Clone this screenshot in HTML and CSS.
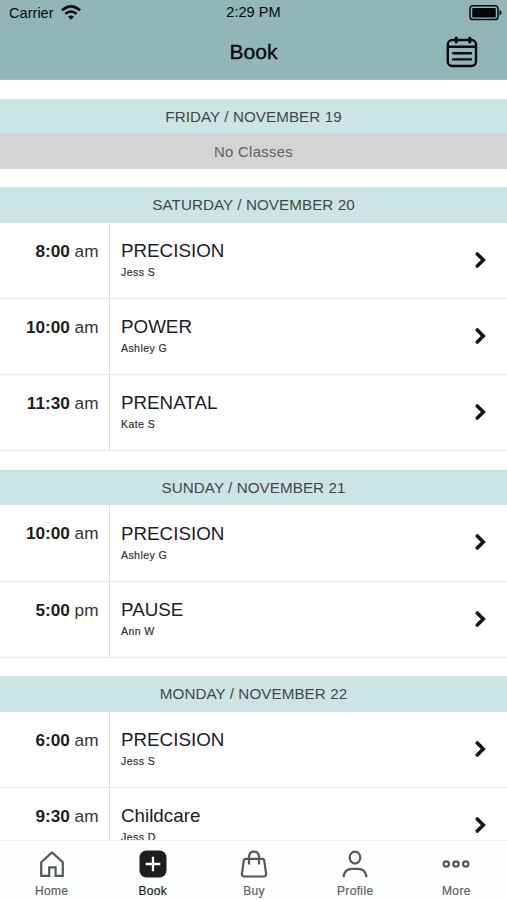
FILE: index.html
```html
<!DOCTYPE html>
<html lang="en">
<head>
<meta charset="utf-8">
<title>Book</title>
<link rel="stylesheet" href="styles.css">
</head>
<body>
<svg class="defs" width="0" height="0" aria-hidden="true">
  <symbol id="chevron" viewBox="0 0 12 18"><path d="M2.3 3 8.3 9l-6 6" fill="none" stroke="#151515" stroke-width="3.6" stroke-linecap="round"/></symbol>
</svg>
<div class="app">
  <header class="top">
    <div class="status">
      <div class="carrier"><span>Carrier</span>
        <svg width="20" height="15" viewBox="0 0 20 15" fill="none" stroke="#05090a" stroke-width="2.5"><path d="M.9 5.3Q10-2.6 19.1 5.3M4.3 8.8q5.7-4.7 11.4 0"/><path d="M7 11.7q3-2.2 6 0l-3 3z" fill="#05090a" stroke="none"/></svg>
      </div>
      <div class="clock">2:29 PM</div>
      <svg class="battery" width="33" height="16" viewBox="0 0 33 16"><rect x="1" y=".8" width="28" height="13.8" rx="3.2" fill="none" stroke="#05090a" stroke-width="1.5"/><rect x="3.2" y="3" width="23.6" height="9.4" rx="1" fill="#05090a"/><path d="M30.5 5q2 .7 2 2.7t-2 2.7z" fill="#05090a"/></svg>
    </div>
    <div class="titlebar">
      <h1>Book</h1>
      <svg class="calendar" width="32" height="32" viewBox="0 0 32 32" fill="none" stroke="#05090a" stroke-width="2.4" stroke-linecap="round"><rect x="1.8" y="4" width="28.2" height="26" rx="4.5"/><path d="M2 10.7h27.5M7.2 17.2h17.8M7.2 23.4h17.8"/><path d="M10.2 2v4M23.8 2v4" stroke-width="3"/></svg>
    </div>
  </header>
  <main class="schedule">
    <section class="day">
      <h2>FRIDAY / NOVEMBER 19</h2>
      <p class="empty">No Classes</p>
    </section>
    <section class="day">
      <h2>SATURDAY / NOVEMBER 20</h2>
      <div class="row"><div class="time"><b>8:00</b> am</div><div class="info"><div class="name">PRECISION</div><div class="who">Jess S</div></div><svg class="go"><use href="#chevron"/></svg></div>
      <div class="row"><div class="time"><b>10:00</b> am</div><div class="info"><div class="name">POWER</div><div class="who">Ashley G</div></div><svg class="go"><use href="#chevron"/></svg></div>
      <div class="row"><div class="time"><b>11:30</b> am</div><div class="info"><div class="name">PRENATAL</div><div class="who">Kate S</div></div><svg class="go"><use href="#chevron"/></svg></div>
    </section>
    <section class="day">
      <h2>SUNDAY / NOVEMBER 21</h2>
      <div class="row"><div class="time"><b>10:00</b> am</div><div class="info"><div class="name">PRECISION</div><div class="who">Ashley G</div></div><svg class="go"><use href="#chevron"/></svg></div>
      <div class="row"><div class="time"><b>5:00</b> pm</div><div class="info"><div class="name">PAUSE</div><div class="who">Ann W</div></div><svg class="go"><use href="#chevron"/></svg></div>
    </section>
    <section class="day">
      <h2>MONDAY / NOVEMBER 22</h2>
      <div class="row"><div class="time"><b>6:00</b> am</div><div class="info"><div class="name">PRECISION</div><div class="who">Jess S</div></div><svg class="go"><use href="#chevron"/></svg></div>
      <div class="row"><div class="time"><b>9:30</b> am</div><div class="info"><div class="name">Childcare</div><div class="who">Jess D</div></div><svg class="go"><use href="#chevron"/></svg></div>
    </section>
  </main>
  <nav class="tabs">
    <div class="tab"><svg viewBox="0 0 28 28"><path d="M3.2 12.2 14 2.4l10.8 9.8v13.6h-7.2v-8.5h-6.4v8.5h-8z"/></svg><span>Home</span></div>
    <div class="tab active"><svg viewBox="0 0 28 28"><rect x=".5" y=".5" width="27" height="27" rx="7" fill="#1b1d1f" stroke="none"/><path d="M14 6.7v14.6M6.7 14h14.6" stroke="#fff" stroke-width="2.3"/></svg><span>Book</span></div>
    <div class="tab"><svg viewBox="0 0 28 28"><path d="M5.7 8.9h16.6q1.7 0 1.9 1.6l1.9 13.1q.2 2.9-2.7 2.9H4.6q-2.9 0-2.7-2.9l1.9-13.1q.2-1.6 1.9-1.6zM9 14.5V6.5q.4-4.9 5-4.9t5 4.9v8"/></svg><span>Buy</span></div>
    <div class="tab"><svg viewBox="0 0 28 28"><ellipse cx="14" cy="7.6" rx="5.3" ry="6"/><path d="M2.7 27.2v-1.5q1.3-6.9 8.3-6.9h6q7 0 8.3 6.9v1.5"/></svg><span>Profile</span></div>
    <div class="tab"><svg viewBox="0 0 28 28"><circle cx="4.3" cy="14" r="2.7"/><circle cx="14" cy="14" r="2.7"/><circle cx="23.7" cy="14" r="2.7"/></svg><span>More</span></div>
  </nav>
</div>
</body>
</html>
```
FILE: styles.css
```css
* { box-sizing: border-box; margin: 0; padding: 0; }
body { font-family: "Liberation Sans", Arial, sans-serif; background: #fff; color: #1b1d1f; overflow: hidden; }
.defs { display: block; }
.app { height: 900px; display: flex; flex-direction: column; overflow: hidden; }
.top { flex: none; height: 80px; background: #92b5b8; border-bottom: 1px solid #a3bec0; color: #05090a; }
.status { height: 25px; display: grid; grid-template-columns: 1fr auto 1fr; align-items: center; padding: 0 5px 0 9px; font-size: 14.6px; }
.carrier { display: flex; align-items: center; gap: 7px; }
.clock { font-size: 14.6px; padding-right: 4px; line-height: 24px; align-self: start; }
.battery { justify-self: end; }
.titlebar { height: 54px; display: grid; grid-template-columns: 1fr auto 1fr; align-items: center; padding-right: 29px; padding-left: 29px; }
.titlebar h1 { grid-column: 2; font-size: 21px; font-weight: 400; -webkit-text-stroke: .35px #05090a; line-height: 54px; }
.calendar { justify-self: end; }
.schedule { flex: 1; min-height: 0; overflow: hidden; padding-top: 18.6px; }
.day { margin-bottom: 18.6px; }
.day h2 { height: 35.5px; line-height: 35px; background: #cde4e4; text-align: center; font-size: 15.2px; font-weight: 400; letter-spacing: .07px; color: #3f4847; }
.empty { height: 34.5px; line-height: 36px; background: #d4d4d4; text-align: center; font-size: 14.8px; letter-spacing: .35px; color: #606060; }
.row { height: 76.2px; display: flex; border-bottom: 1px solid #e4e9ea; }
.time { width: 110px; padding: 18px 10.5px 0 0; border-right: 1px solid #d9e0e1; text-align: right; font-size: 17.2px; line-height: 20px; white-space: nowrap; color: #333; }
.time b { color: #1b1d1f; }
.info { flex: 1; padding: 17.2px 0 0 11px; }
.name { font-size: 18.8px; line-height: 22px; }
.who { margin-top: 4px; font-size: 10.6px; line-height: 13px; letter-spacing: .38px; color: #333; -webkit-text-stroke: .2px #333; }
.go { width: 12px; height: 18px; margin: 28px 20px 0 0; }
.tabs { flex: none; height: 60px; display: grid; grid-template-columns: repeat(5, 1fr); border-top: 1px solid #f0f1f1; background: #fdfefe; padding-left: 1px; }
.tab { display: flex; flex-direction: column; align-items: center; padding-top: 9px; font-size: 12px; letter-spacing: .35px; line-height: 14px; color: #5d6163; -webkit-text-stroke: .2px currentColor; }
.tab svg { width: 28px; height: 28px; fill: none; stroke: #54585b; stroke-width: 2.2; }
.tab span { margin-top: 6px; }
.active { color: #1b1d1f; }
```
